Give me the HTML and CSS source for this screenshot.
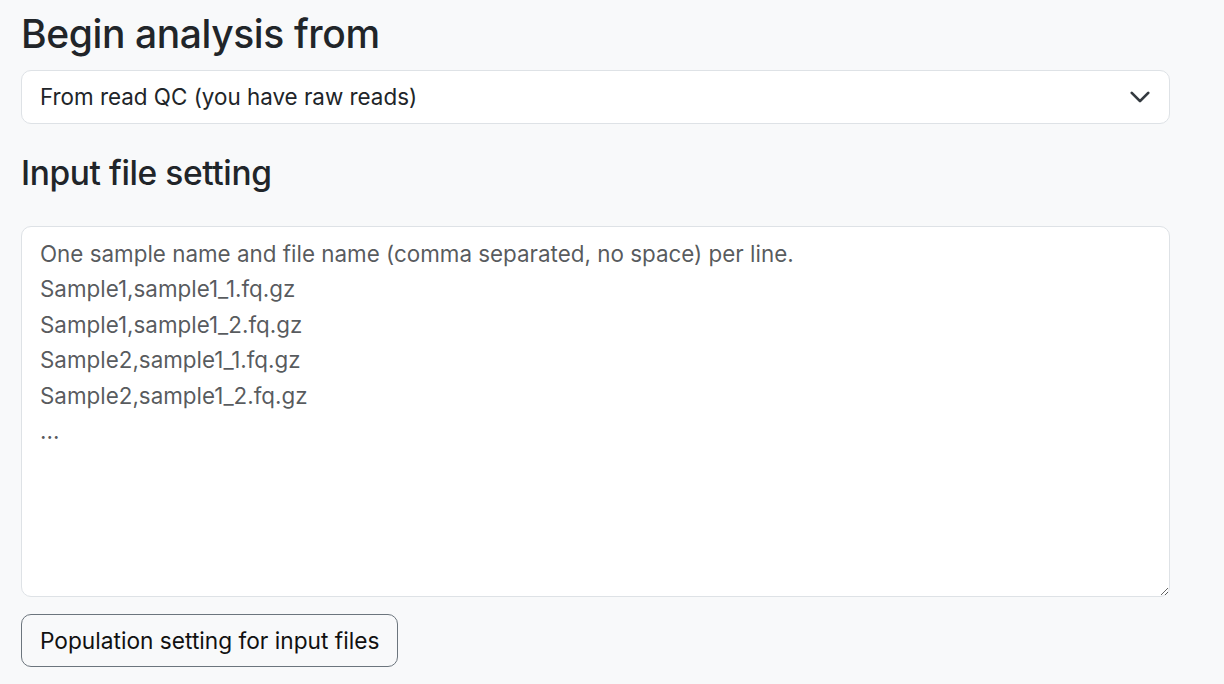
FILE: index.html
```html
<!DOCTYPE html>
<html lang="en">
<head>
<meta charset="utf-8">
<title>Analysis settings</title>
<link rel="stylesheet" href="styles.css">
</head>
<body>
<main class="page">
  <h3 class="section-title">Begin analysis from</h3>
  <div class="select-wrap">
    <select class="form-select">
      <option>From read QC (you have raw reads)</option>
    </select>
    <svg class="select-chevron" viewBox="0 0 16 16" width="22" height="22" aria-hidden="true">
      <path d="m2 5 6 6 6-6" fill="none" stroke="#343a40" stroke-width="2" stroke-linecap="round" stroke-linejoin="round"/>
    </svg>
  </div>
  <h4 class="section-subtitle">Input file setting</h4>
  <textarea class="form-textarea" placeholder="One sample name and file name (comma separated, no space) per line.
Sample1,sample1_1.fq.gz
Sample1,sample1_2.fq.gz
Sample2,sample1_1.fq.gz
Sample2,sample1_2.fq.gz
..."></textarea>
  <button class="btn-outline" type="button">Population setting for input files</button>
</main>
</body>
</html>
```

FILE: styles.css
```css
html, body {
  margin: 0;
  padding: 0;
  background: #f8f9fa;
}

body {
  font-family: Inter, "Noto Sans", "Liberation Sans", sans-serif;
  color: #212529;
}

.page {
  width: 1149px;
  padding: 11px 0 0 21px;
  display: flex;
  flex-direction: column;
  align-items: flex-start;
}

.section-title,
.section-subtitle {
  margin: 0;
  font-weight: 500;
  line-height: 1.2;
  letter-spacing: -0.4px;
  color: #212529;
}

.section-title {
  font-size: 39px;
}

.section-subtitle {
  font-size: 33.5px;
  margin-top: 29px;
}

.select-wrap {
  position: relative;
  width: 100%;
  margin-top: 12px;
}

.form-select {
  display: block;
  width: 100%;
  height: 54px;
  padding: 0 60px 0 18px;
  font-family: inherit;
  font-size: 22.4px;
  color: #212529;
  background: #fff;
  border: 1px solid #dee2e6;
  border-radius: 10px;
  appearance: none;
  -webkit-appearance: none;
  outline: none;
}

.select-chevron {
  position: absolute;
  right: 19px;
  top: 16px;
  pointer-events: none;
}

.form-textarea {
  display: block;
  box-sizing: border-box;
  width: 100%;
  height: 371px;
  margin-top: 33px;
  padding: 9px 18px;
  font-family: inherit;
  font-size: 22.4px;
  line-height: 35.4px;
  color: #212529;
  background: #fff;
  border: 1px solid #dee2e6;
  border-radius: 10px;
  resize: vertical;
  outline: none;
}

.form-textarea::placeholder {
  color: rgba(33, 37, 41, 0.75);
  opacity: 1;
}

.btn-outline {
  margin-top: 17px;
  height: 53px;
  padding: 0 18px;
  font-family: inherit;
  font-size: 22.7px;
  color: #111;
  background: transparent;
  border: 1px solid #6c757d;
  border-radius: 10px;
  cursor: pointer;
}
```
